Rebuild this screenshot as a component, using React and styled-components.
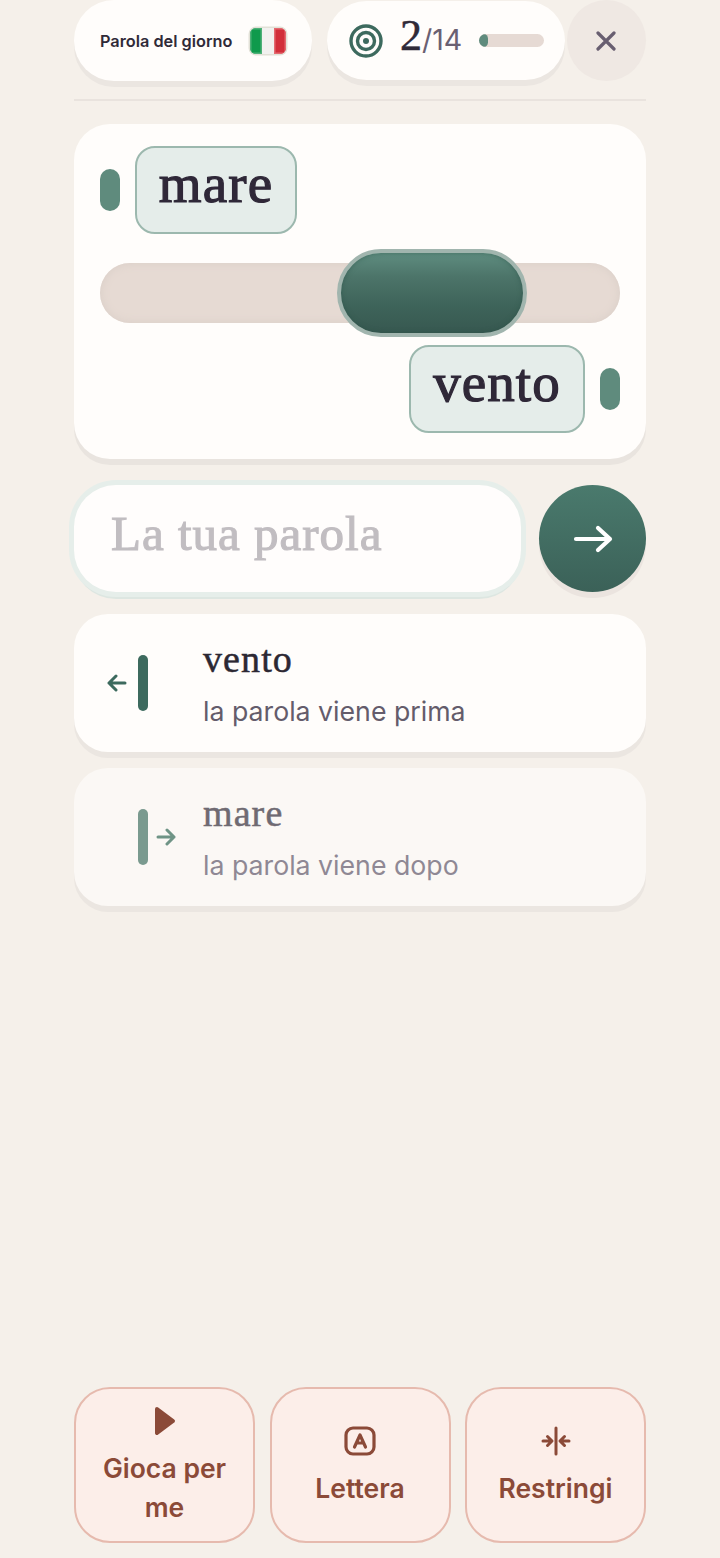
import React from "react";
import styled, { createGlobalStyle } from "styled-components";

const Global = createGlobalStyle`
  html, body { margin: 0; padding: 0; background: #f5f0ea; }
  * { box-sizing: border-box; }
`;
const SERIF = `"Liberation Serif", serif`;
const SANS = `Inter, "Noto Sans", sans-serif`;

const Page = styled.div`
  width: 720px; height: 1558px; padding: 0 74px 15px;
  display: flex; flex-direction: column; background: #f5f0ea; overflow: hidden;
`;
const TopBar = styled.div`
  display: flex; align-items: center; height: 81px;
`;
const Pill = styled.div`
  width: 238px; height: ${p => p.$h}px; border-radius: 40px; background: #fffdfb;
  box-shadow: 0 6px 0 #ebe6e1; display: flex; align-items: center;
  padding-left: ${p => p.$pl}px; margin-right: ${p => p.$mr}px; flex: none;
`;
const DayLabel = styled.span`
  font: 600 16.3px ${SANS}; color: #2f2a38; white-space: nowrap; width: 150px; flex: none;
`;
const Flag = styled.div`
  width: 36px; height: 26px; border-radius: 6px; overflow: hidden; display: flex;
  box-shadow: 0 0 0 1.5px rgba(190,190,170,.45);
`;
const FlagBand = styled.i`
  flex: 1; background: ${p => p.$c}; box-shadow: inset 0 0 0 1.5px ${p => p.$edge};
`;
const Score = styled.div`
  display: flex; align-items: baseline; margin-left: 17px; margin-top: -10px; white-space: nowrap; width: 79px; flex: none;
`;
const ScoreNow = styled.span`
  font: 400 44px ${SERIF}; color: #2f2a38; -webkit-text-stroke: .5px #2f2a38;
`;
const ScoreMax = styled.span`
  font: 400 28.5px ${SANS}; color: #6a6072;
`;
const Progress = styled.div`
  width: 65px; height: 13px; border-radius: 7px; background: #e6dad4; overflow: hidden;
`;
const ProgressFill = styled.div`
  height: 100%; border-radius: 7px; background: #5f8b7d;
`;
const CloseBtn = styled.div`
  width: 79px; height: 81px; border-radius: 50%; background: #efe8e3; flex: none;
  display: flex; align-items: center; justify-content: center; padding-right: 2px;
`;
const Divider = styled.div`
  height: 2px; background: #e9e3de; margin-top: 18px; flex: none;
`;
const Card = styled.section`
  margin-top: 23px; height: 335px; border-radius: 36px; background: #fffdfb;
  box-shadow: 0 6px 0 #e9e4df; padding: 22px 26px 26px; flex: none;
`;
const ChipRow = styled.div`
  display: flex; align-items: center; gap: 15px; justify-content: ${p => p.$end ? "flex-end" : "flex-start"};
`;
const Dot = styled.div`
  width: 20px; height: 42px; border-radius: 10px; background: #5f8b7d; flex: none;
`;
const Chip = styled.div`
  height: 88px; width: ${p => p.$w}px; border-radius: 20px; background: #e5edea; border: 2px solid #9cb8ae;
  display: flex; align-items: center; justify-content: center;
  font: 400 55px ${SERIF}; color: #2f2838; -webkit-text-stroke: 1.2px #2f2838; padding-bottom: 13px; letter-spacing: 1.1px;
`;
const Track = styled.div`
  position: relative; height: 60px; border-radius: 30px; margin: 29px 0 22px; background: #e6dad3;
  box-shadow: inset 0 0 10px #d9cec7;
`;
const Thumb = styled.div`
  position: absolute; left: 237px; top: -14px; width: 190px; height: 88px; border-radius: 44px;
  background: linear-gradient(180deg, #5f8d80 0%, #4c7469 30%, #3e645a 65%, #375850 100%);
  border: 4px solid #a1b5ae; box-shadow: inset 0 0 5px rgba(40,80,70,.55);
`;
const InputRow = styled.div`
  display: flex; justify-content: space-between; margin-top: 26px; flex: none;
`;
const InputBox = styled.div`
  width: 447px; height: 107px; border-radius: 42px; background: #fffdfc; padding-left: 37px;
  display: flex; align-items: center; box-shadow: 0 0 0 5px #e6eeea, 0 6px 0 1px #dde6e1;
  font: 400 49px ${SERIF}; color: #c1bdc1; -webkit-text-stroke: 1.1px #c1bdc1; padding-bottom: 10px; letter-spacing: 1px;
`;
const SendBtn = styled.div`
  width: 107px; height: 107px; border-radius: 50%; background: linear-gradient(180deg, #4a7a6d, #3b6158);
  box-shadow: 0 6px 0 #ebe4df; display: flex; align-items: center; justify-content: center;
`;
const Guess = styled.div`
  margin-top: ${p => p.$mt}px; height: 138px; border-radius: 34px; background: ${p => p.$dim ? "#fbf8f5" : "#fffdfb"};
  box-shadow: 0 6px 0 #ebe6e1; display: flex; align-items: center; flex: none;
`;
const Marker = styled.div`
  width: 129px; padding-left: 33px; flex: none; display: flex; align-items: center; height: 56px;
`;
const MarkerSlot = styled.div`
  width: 24px; display: flex; align-items: center;
`;
const MarkerBar = styled.div`
  width: 10px; height: 56px; border-radius: 5px; margin: 0 8px 0 7px; flex: none; background: ${p => p.$c};
`;
const GuessText = styled.div`
  display: flex; flex-direction: column; padding-bottom: 2px;
`;
const GuessWord = styled.div`
  font: 400 38px/42px ${SERIF}; color: ${p => p.$dim ? "#6f6a72" : "#2c2833"}; -webkit-text-stroke: .5px ${p => p.$dim ? "#6f6a72" : "#2c2833"};
  letter-spacing: 1.1px; margin-top: 1px;
`;
const GuessHint = styled.div`
  font: 400 26.7px/32px ${SANS}; color: ${p => p.$dim ? "#8f8894" : "#645c6b"}; margin-top: 15px;
`;
const Spacer = styled.div`
  flex: 1;
`;
const Actions = styled.div`
  display: flex; justify-content: space-between; flex: none;
`;
const Action = styled.div`
  width: 181px; height: 156px; border-radius: 36px; background: #fceee9; border: 2px solid #e6baae;
  display: flex; flex-direction: column; align-items: center; justify-content: center;
  color: #8b4a38; text-align: center; gap: 13px; padding: 3px 16px 0;
`;
const ActionLabel = styled.div`
  font: 600 26.5px/39px ${SANS}; color: #8b4a38;
`;

const TargetIcon = () => (
  <svg width="34" height="34" viewBox="0 0 34 34" fill="none" stroke="#3d6a5e" strokeWidth="3.4">
    <circle cx="17" cy="17" r="15" />
    <circle cx="17" cy="17" r="8.5" />
    <circle cx="17" cy="17" r="3" fill="#3d6a5e" stroke="none" />
  </svg>
);
const CloseIcon = () => (
  <svg width="20" height="20" viewBox="0 0 20 20" stroke="#685e70" strokeWidth="3.2" strokeLinecap="round">
    <path d="M2 2 18 18M18 2 2 18" />
  </svg>
);
const ArrowBig = () => (
  <svg width="40" height="28" viewBox="0 0 40 28" fill="none" stroke="#fff" strokeWidth="4.2" strokeLinecap="round" strokeLinejoin="round">
    <path d="M3 14h34M25 3l12 11-12 11" />
  </svg>
);
const ArrowSmall = ({ c, left }) => (
  <svg width="20" height="18" viewBox="0 0 20 18" fill="none" stroke={c} strokeWidth="3" strokeLinecap="round" strokeLinejoin="round">
    {left ? <path d="M18 9H2M9 2 2 9l7 7" /> : <path d="M2 9h16M11 2l7 7-7 7" />}
  </svg>
);
const PlayIcon = () => (
  <svg width="22" height="30" viewBox="0 0 22 30">
    <path d="M3 3 19 15 3 27Z" fill="#8b4a38" stroke="#8b4a38" strokeWidth="4" strokeLinejoin="round" />
  </svg>
);
const LetterIcon = () => (
  <svg width="32" height="30" viewBox="0 0 32 30" fill="none" stroke="#8b4a38" strokeWidth="3.2" strokeLinecap="round" strokeLinejoin="round">
    <rect x="2" y="2" width="28" height="26" rx="7" />
    <path d="M10.500 21 16 9l5.500 12M12.500 17h7" />
  </svg>
);
const NarrowIcon = () => (
  <svg width="30" height="30" viewBox="0 0 30 30" fill="none" stroke="#8b4a38" strokeWidth="3" strokeLinecap="round" strokeLinejoin="round">
    <path d="M15 2v26M2 15h8M6.500 10.500 11 15l-4.500 4.500M28 15h-8M23.500 10.500 19 15l4.500 4.500" />
  </svg>
);

export default function App() {
  return (
    <Page>
      <Global />
      <TopBar>
        <Pill $h={81} $pl={26} $mr={15}>
          <DayLabel>Parola del giorno</DayLabel>
          <Flag>
            <FlagBand $c="#0f9a4c" $edge="#4fb078" />
            <FlagBand $c="#f2f1ef" $edge="#f2f1ef" />
            <FlagBand $c="#d22f3a" $edge="#e46a70" />
          </Flag>
        </Pill>
        <Pill $h={79} $pl={22} $mr={2}>
          <TargetIcon />
          <Score>
            <ScoreNow>2</ScoreNow>
            <ScoreMax>/14</ScoreMax>
          </Score>
          <Progress>
            <ProgressFill style={{ width: `${(2 / 14) * 100}%` }} />
          </Progress>
        </Pill>
        <CloseBtn><CloseIcon /></CloseBtn>
      </TopBar>
      <Divider />
      <Card>
        <ChipRow>
          <Dot />
          <Chip $w={162}>mare</Chip>
        </ChipRow>
        <Track><Thumb /></Track>
        <ChipRow $end>
          <Chip $w={176}>vento</Chip>
          <Dot />
        </ChipRow>
      </Card>
      <InputRow>
        <InputBox>La tua parola</InputBox>
        <SendBtn><ArrowBig /></SendBtn>
      </InputRow>
      <Guess $mt={22}>
        <Marker>
          <MarkerSlot><ArrowSmall left c="#3d6a5e" /></MarkerSlot>
          <MarkerBar $c="#3d6a5e" />
        </Marker>
        <GuessText>
          <GuessWord>vento</GuessWord>
          <GuessHint>la parola viene prima</GuessHint>
        </GuessText>
      </Guess>
      <Guess $mt={16} $dim>
        <Marker>
          <MarkerSlot />
          <MarkerBar $c="#7a9a8f" />
          <ArrowSmall c="#6f9486" />
        </Marker>
        <GuessText>
          <GuessWord $dim>mare</GuessWord>
          <GuessHint $dim>la parola viene dopo</GuessHint>
        </GuessText>
      </Guess>
      <Spacer />
      <Actions>
        <Action><PlayIcon /><ActionLabel>Gioca per me</ActionLabel></Action>
        <Action><LetterIcon /><ActionLabel>Lettera</ActionLabel></Action>
        <Action><NarrowIcon /><ActionLabel>Restringi</ActionLabel></Action>
      </Actions>
    </Page>
  );
}
